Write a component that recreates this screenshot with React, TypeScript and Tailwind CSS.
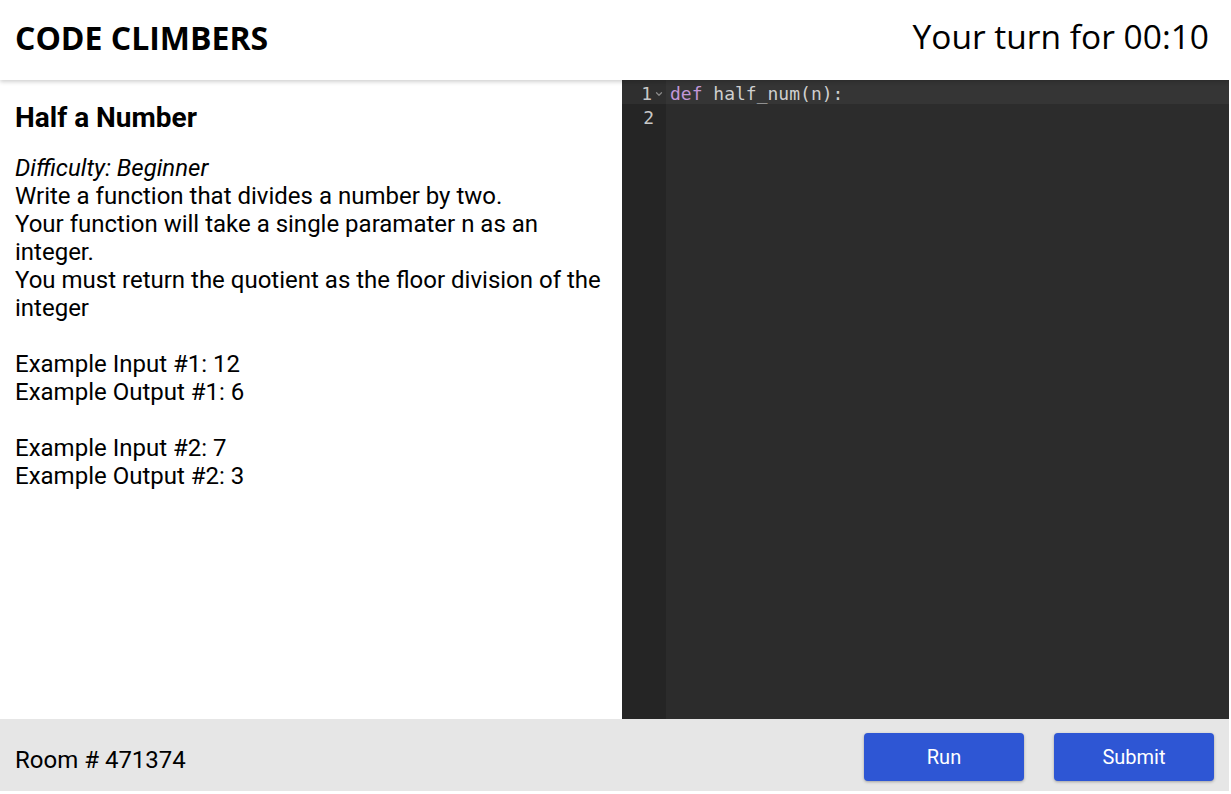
import { ChevronDown } from 'lucide-react';

const problem = [
  'Write a function that divides a number by two.',
  'Your function will take a single paramater n as an integer.',
  'You must return the quotient as the floor division of the integer',
];

export default function App() {
  return (
    <div className="w-[1229px] h-[791px] flex flex-col bg-white text-black overflow-hidden" style={{ fontFamily: 'Roboto, "Liberation Sans", sans-serif' }}>
      {/* header */}
      <header className="relative z-10 h-20 shrink-0 flex items-center justify-between pl-4 pr-5 bg-white shadow-[0_2px_4px_rgba(0,0,0,0.18)]">
        <h1 className="text-[32px] font-bold pb-1 -ml-px" style={{ fontFamily: '"Open Sans", "Noto Sans", sans-serif' }}>
          CODE CLIMBERS
        </h1>
        <div className="text-[33.5px] pb-2" style={{ fontFamily: '"Open Sans", "Noto Sans", sans-serif' }}>
          Your turn for 00:10
        </div>
      </header>

      {/* main */}
      <main className="flex flex-1 min-h-0">
        <section className="w-[622px] shrink-0 pl-4 pr-3 pt-5 text-[24px] leading-[28px]">
          <h2 className="text-[28px] font-bold leading-[36px] mb-[18px] -ml-px">Half a Number</h2>
          <div className="-ml-px">
            <p className="italic">Difficulty: Beginner</p>
            {problem.map((line) => (
              <p key={line}>{line}</p>
            ))}
            <br />
            <p>Example Input #1: 12</p>
            <p>Example Output #1: 6</p>
            <br />
            <p>Example Input #2: 7</p>
            <p>Example Output #2: 3</p>
          </div>
        </section>

        <section className="flex-1 flex bg-[#2c2c2c] text-[18px] leading-6" style={{ fontFamily: '"DejaVu Sans Mono", monospace' }}>
          <div className="w-11 shrink-0 bg-[#252525] text-[#c8c8c8]">
            <div className="h-6 flex items-center justify-end bg-[#2f2f2f] pr-0.5 pt-1">
              <span>1</span>
              <ChevronDown className="w-2.5 h-2.5 ml-0.5 text-[#888]" strokeWidth={3} />
            </div>
            <div className="h-6 flex items-center justify-end pr-3 pt-1">2</div>
          </div>
          <div className="flex-1">
            <div className="h-6 bg-[#353535] pl-1 pt-0.5 text-[#cfcfcf]">
              <span className="text-[#c397d8]">def</span> half_num(n):
            </div>
            <div className="h-6" />
          </div>
        </section>
      </main>

      {/* footer */}
      <footer className="h-[72px] shrink-0 flex items-center justify-between bg-[#e6e6e6] pl-4 pr-[15px]">
        <div className="text-[24px] pt-[10px] -ml-px">Room # 471374</div>
        <div className="flex gap-[30px] pt-[4px]">
          <button className="w-40 h-12 rounded bg-[#2e56d4] text-white text-[20px] shadow-[0_1px_3px_rgba(0,0,0,0.3)]">Run</button>
          <button className="w-40 h-12 rounded bg-[#2e56d4] text-white text-[20px] shadow-[0_1px_3px_rgba(0,0,0,0.3)]">Submit</button>
        </div>
      </footer>
    </div>
  );
}
